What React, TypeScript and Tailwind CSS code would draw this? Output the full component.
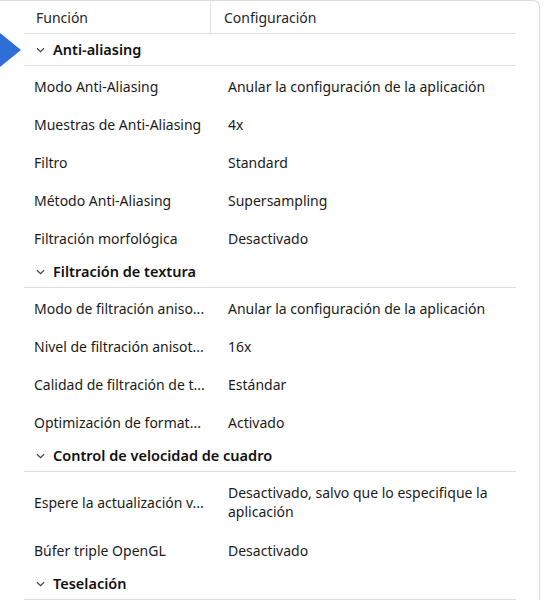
import React from "react";

type Row = { label: string; value: string };
type Section = { title: string; rows: Row[] };

// labels are shown already shortened, as the column cuts them
const sections: Section[] = [
  {
    title: "Anti-aliasing",
    rows: [
      { label: "Modo Anti-Aliasing", value: "Anular la configuración de la aplicación" },
      { label: "Muestras de Anti-Aliasing", value: "4x" },
      { label: "Filtro", value: "Standard" },
      { label: "Método Anti-Aliasing", value: "Supersampling" },
      { label: "Filtración morfológica", value: "Desactivado" },
    ],
  },
  {
    title: "Filtración de textura",
    rows: [
      { label: "Modo de filtración aniso...", value: "Anular la configuración de la aplicación" },
      { label: "Nivel de filtración anisot...", value: "16x" },
      { label: "Calidad de filtración de t...", value: "Estándar" },
      { label: "Optimización de format...", value: "Activado" },
    ],
  },
  {
    title: "Control de velocidad de cuadro",
    rows: [
      {
        label: "Espere la actualización v...",
        value: "Desactivado, salvo que lo especifique la aplicación",
      },
      { label: "Búfer triple OpenGL", value: "Desactivado" },
    ],
  },
  { title: "Teselación", rows: [] },
];

function Chevron() {
  return (
    <svg width="9" height="6" viewBox="0 0 9 6" className="shrink-0">
      <path d="M1 1.2 L4.5 4.6 L8 1.2" fill="none" stroke="#444" strokeWidth="1.2" />
    </svg>
  );
}

export default function App() {
  return (
    <div
      className="relative w-[544px] h-[600px] overflow-hidden bg-white text-[#1b1b1b]"
      style={{ fontFamily: '"Noto Sans", "Open Sans", sans-serif' }}
    >
      {/* selection marker */}
      <svg width="22" height="36" viewBox="0 0 22 36" className="absolute left-0 top-[32px]">
        <polygon points="0,1 21,18 0,35" fill="#2d6fd7" />
      </svg>

      <div className="w-[540px] h-full border-t border-r border-[#dcdcdc] rounded-tr-[7px] pl-[24px] pr-[23px] text-[14px]">
        {/* header */}
        <div className="flex h-[33px] border-b border-[#dedede] text-[#262626]">
          <div className="w-[187px] border-r border-[#e2e2e2] pl-[12px] flex items-center">Función</div>
          <div className="flex-1 pl-[13px] flex items-center">Configuración</div>
        </div>

        {sections.map((s) => (
          <div key={s.title}>
            <div className="flex items-center gap-[8px] h-[32px] border-b border-[#dedede] pl-[12px] pt-[1px] font-semibold text-[14.5px] text-[#111]">
              <Chevron />
              <span>{s.title}</span>
            </div>
            {s.rows.map((r) => (
              <div
                key={r.label}
                className={`flex items-center pt-[2px] ${r.value.length > 45 ? "h-[58px]" : "h-[38px]"}`}
              >
                <div className="w-[204px] shrink-0 pl-[10px] pr-[8px] whitespace-nowrap overflow-hidden">
                  {r.label}
                </div>
                <div className="flex-1 pr-[20px] leading-[19px]">{r.value}</div>
              </div>
            ))}
          </div>
        ))}
      </div>
    </div>
  );
}
